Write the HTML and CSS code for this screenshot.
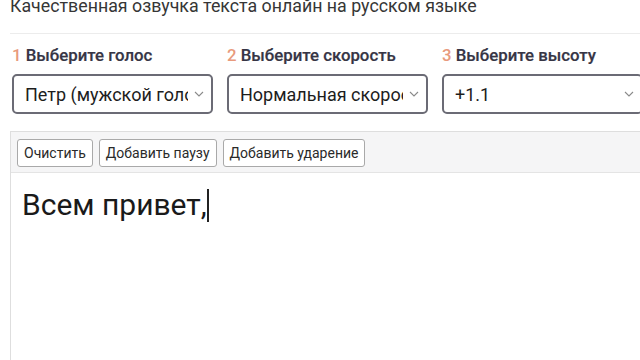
FILE: index.html
```html
<!DOCTYPE html>
<html lang="ru">
<head>
<meta charset="utf-8">
<link rel="stylesheet" href="styles.css">
</head>
<body>
<div class="page">
  <h1 class="title">Качественная озвучка текста онлайн на русском языке</h1>
  <div class="divider"></div>
  <div class="controls">
    <div class="field">
      <div class="label"><span class="num">1</span> Выберите голос</div>
      <div class="select"><span class="value">Петр (мужской голос)</span><svg class="chev" viewBox="0 0 10 6"><path d="M1 1 L5 5 L9 1" fill="none" stroke="#8a8a8a" stroke-width="1.1"/></svg></div>
    </div>
    <div class="field">
      <div class="label"><span class="num">2</span> Выберите скорость</div>
      <div class="select"><span class="value">Нормальная скорость</span><svg class="chev" viewBox="0 0 10 6"><path d="M1 1 L5 5 L9 1" fill="none" stroke="#8a8a8a" stroke-width="1.1"/></svg></div>
    </div>
    <div class="field">
      <div class="label"><span class="num">3</span> Выберите высоту</div>
      <div class="select"><span class="value">+1.1</span><svg class="chev" viewBox="0 0 10 6"><path d="M1 1 L5 5 L9 1" fill="none" stroke="#8a8a8a" stroke-width="1.1"/></svg></div>
    </div>
  </div>
  <div class="editor">
    <div class="toolbar">
      <button class="btn">Очистить</button>
      <button class="btn">Добавить паузу</button>
      <button class="btn">Добавить ударение</button>
    </div>
    <div class="text">Всем привет,<span class="caret"></span></div>
  </div>
</div>
</body>
</html>
```
FILE: styles.css
```css
* { box-sizing: border-box; }
html, body { margin: 0; padding: 0; background: #fff; overflow: hidden; }
body { font-family: Roboto, "Noto Sans", sans-serif; color: #222; }
.page { padding-left: 10px; margin-top: -7px; height: 367px; overflow: hidden; }
.title {
  margin: 0;
  padding-top: 2px;
  font-size: 17.8px;
  font-weight: 400;
  line-height: 22px;
  color: #363636;
  white-space: nowrap;
}
.divider { height: 1px; background: #ececec; margin-top: 16px; }
.controls {
  display: grid;
  grid-template-columns: 201px 201px 201px;
  column-gap: 14px;
  padding-left: 2px;
  margin-top: 11px;
}
.label {
  font-size: 16.8px;
  font-weight: 500;
  color: #363545;
  line-height: 20px;
  white-space: nowrap;
  -webkit-text-stroke: 0.2px #363545;
}
.num { color: #e89a7c; -webkit-text-stroke: 0; }
.select {
  margin-top: 9px;
  height: 40px;
  border: 2px solid #6b6b75;
  border-radius: 5px;
  display: flex;
  align-items: center;
  padding: 0 7px 0 11px;
  background: #fff;
}
.value {
  flex: 1;
  font-size: 18px;
  color: #1d1d1d;
  white-space: nowrap;
  overflow: hidden;
  min-width: 0;
}
.chev { width: 10px; height: 6px; margin-left: 6px; flex: none; }
.editor {
  margin-top: 17px;
  border: 1px solid #dedede;
  border-right: none;
  border-bottom: none;
  height: 300px;
}
.toolbar {
  background: #f5f5f6;
  border-bottom: 1px solid #e4e4e4;
  display: flex;
  gap: 6px;
  padding: 7px 6px 5px;
}
.btn {
  font-family: Roboto, "Noto Sans", sans-serif;
  font-size: 14px;
  color: #2a2a2a;
  background: #fff;
  border: 1px solid #a9a9a9;
  border-radius: 3px;
  height: 28px;
  padding: 0 6px;
  line-height: 26px;
}
.text {
  padding: 14px 11px;
  font-size: 30px;
  line-height: 36px;
  color: #1a1a1a;
}
.caret {
  display: inline-block;
  width: 2px;
  height: 33px;
  background: #222;
  vertical-align: -7px;
  margin-left: 0;
}
```
